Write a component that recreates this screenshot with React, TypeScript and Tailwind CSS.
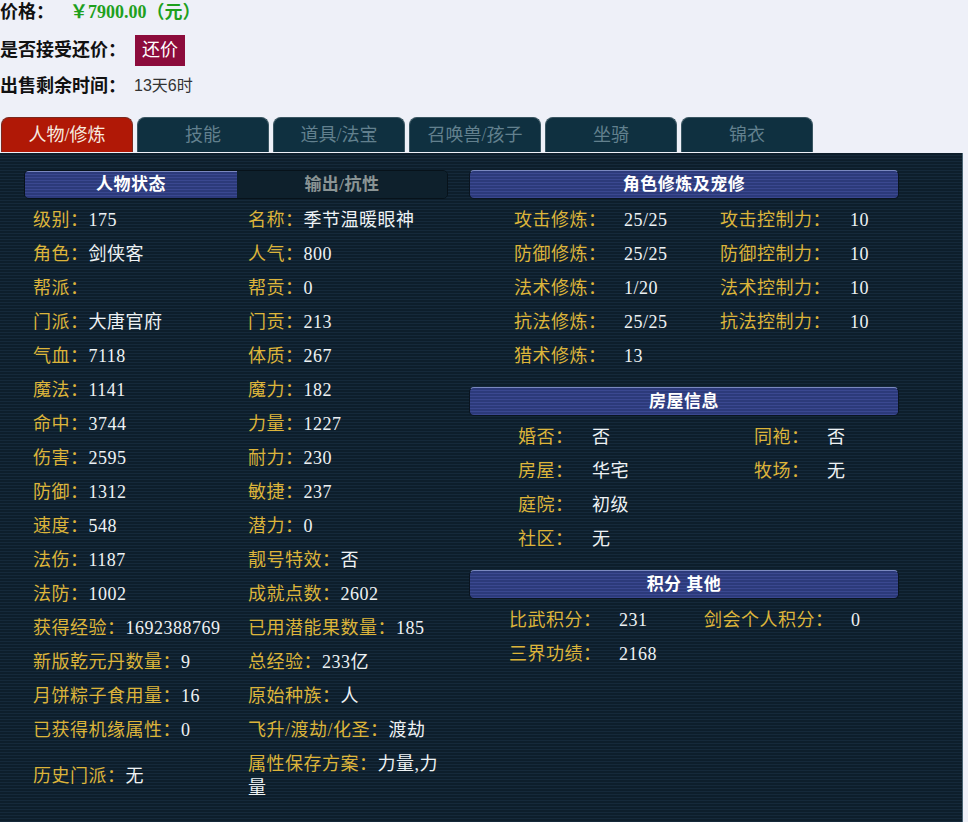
import React from "react";

type Pair = [string, string];

const FONT = "font-['Liberation_Serif','Noto_Sans_CJK_SC',serif]";
const SCAN =
   "bg-[repeating-linear-gradient(180deg,#0d1e2b_0px,#0d1e2b_2px,#15293a_2px,#15293a_3px)]";
const BAR =
   "bg-[repeating-linear-gradient(180deg,#2c3a7a_0px,#2c3a7a_2px,#3a4890_2px,#3a4890_3px)]";

const tabs = ["人物/修炼", "技能", "道具/法宝", "召唤兽/孩子", "坐骑", "锦衣"];

// "|" marks where a long value breaks onto the next line
const baseRows: [Pair, Pair][] = [
   [["级别", "175"], ["名称", "季节温暖眼神"]],
   [["角色", "剑侠客"], ["人气", "800"]],
   [["帮派", ""], ["帮贡", "0"]],
   [["门派", "大唐官府"], ["门贡", "213"]],
   [["气血", "7118"], ["体质", "267"]],
   [["魔法", "1141"], ["魔力", "182"]],
   [["命中", "3744"], ["力量", "1227"]],
   [["伤害", "2595"], ["耐力", "230"]],
   [["防御", "1312"], ["敏捷", "237"]],
   [["速度", "548"], ["潜力", "0"]],
   [["法伤", "1187"], ["靓号特效", "否"]],
   [["法防", "1002"], ["成就点数", "2602"]],
   [["获得经验", "1692388769"], ["已用潜能果数量", "185"]],
   [["新版乾元丹数量", "9"], ["总经验", "233亿"]],
   [["月饼粽子食用量", "16"], ["原始种族", "人"]],
   [["已获得机缘属性", "0"], ["飞升/渡劫/化圣", "渡劫"]],
   [["历史门派", "无"], ["属性保存方案", "力量,力|量"]],
];

const cultivation: [Pair, Pair | null][] = [
   [["攻击修炼", "25/25"], ["攻击控制力", "10"]],
   [["防御修炼", "25/25"], ["防御控制力", "10"]],
   [["法术修炼", "1/20"], ["法术控制力", "10"]],
   [["抗法修炼", "25/25"], ["抗法控制力", "10"]],
   [["猎术修炼", "13"], null],
];

const house: [Pair, Pair | null][] = [
   [["婚否", "否"], ["同袍", "否"]],
   [["房屋", "华宅"], ["牧场", "无"]],
   [["庭院", "初级"], null],
   [["社区", "无"], null],
];

const scores: [Pair, Pair | null][] = [
   [["比武积分", "231"], ["剑会个人积分", "0"]],
   [["三界功绩", "2168"], null],
];

const Label = ({ text }: { text: string }) => <span className="text-[#dcb43a]">{text}：</span>;
const Value = ({ text }: { text: string }) => <span className="text-[#eef2f4]">{text}</span>;

const Field = ({ item }: { item: Pair }) => {
   const parts = item[1].split("|");
   return (
      <div className="text-[#eef2f4]">
         <span className="text-[#dcb43a]">{item[0]}：</span>
         {parts.map((p, i) => (
            <React.Fragment key={i}>
               {i > 0 && <br />}
               {p}
            </React.Fragment>
         ))}
      </div>
   );
};

const Bar = ({ title }: { title: string }) => (
   <div
      className={`${BAR} h-[29px] rounded-[5px] border border-[#0a1520] border-t-[#7a88c0] flex items-center justify-center text-[17px] font-bold text-white`}
   >
      {title}
   </div>
);

// four-column rows used by the right-hand blocks
const KvTable = ({ rows, cols, pad }: { rows: [Pair, Pair | null][]; cols: string; pad: string }) => (
   <div className={`mt-[4px] ${pad}`}>
      {rows.map(([a, b], i) => (
         <div key={i} className={`grid ${cols} h-[34px] items-center`}>
            <Label text={a[0]} />
            <Value text={a[1]} />
            {b ? <Label text={b[0]} /> : <span />}
            {b ? <Value text={b[1]} /> : <span />}
         </div>
      ))}
   </div>
);

export default function App() {
   return (
      <div className={`${FONT} bg-[#eef0f8] min-h-[822px] w-[968px] overflow-hidden`}>
         <div className="h-[24px] flex items-center text-[18px] font-bold text-[#111]">
            <span>价格：</span>
            <span className="ml-[16px] text-[#1ea01e]">￥7900.00（元）</span>
         </div>
         <div className="mt-[11px] h-[31px] flex items-center text-[18px] font-bold text-[#111]">
            <span>是否接受还价：</span>
            <span className="ml-[9px] w-[50px] h-[31px] bg-[#8c0c3c] text-white font-normal flex items-center justify-center">
               还价
            </span>
         </div>
         <div className="mt-[8px] h-[24px] flex items-center text-[18px]">
            <span className="font-bold text-[#111]">出售剩余时间：</span>
            <span className="ml-[8px] text-[16px] text-[#333] font-['Liberation_Sans','Noto_Sans_CJK_SC',sans-serif]">
               13天6时
            </span>
         </div>

         <div className="mt-[19px] flex gap-[4px] pl-[1px] h-[35px]">
            {tabs.map((t, i) => (
               <div
                  key={t}
                  className={`w-[132px] rounded-t-[8px] border border-b-0 flex items-center justify-center text-[18px] ${
                     i === 0
                        ? "bg-[#b01806] border-[#7a2a20] text-[#f8ece0]"
                        : "bg-[#0f3040] border-[#3a5662] text-[#62808e]"
                  }`}
               >
                  {t}
               </div>
            ))}
         </div>

         <div className={`${SCAN} mt-[1px] w-[963px] min-h-[669px] border-r border-[#4a6474] pt-[17px] pl-[24px] flex gap-[21px] text-[18px] tracking-[0.5px]`}>
            <div className="w-[424px]">
               <div className="h-[29px] rounded-[5px] border border-[#07121a] flex overflow-hidden">
                  <div className={`${BAR} w-[212px] border-t border-[#7a88c0] flex items-center justify-center text-[17px] font-bold text-white`}>
                     人物状态
                  </div>
                  <div className="flex-1 flex items-center justify-center text-[17px] font-bold text-[#8a9494] bg-[#0e202c]">
                     输出/抗性
                  </div>
               </div>
               <div className="mt-[4px] pl-[9px]">
                  {baseRows.map(([a, b], i) => (
                     <div
                        key={i}
                        className={`grid grid-cols-[215px_200px] items-center leading-[24px] ${
                           i === baseRows.length - 1 ? "py-[5px]" : "h-[34px]"
                        }`}
                     >
                        <Field item={a} />
                        <Field item={b} />
                     </div>
                  ))}
               </div>
            </div>

            <div className="w-[430px]">
               <Bar title="角色修炼及宠修" />
               <KvTable rows={cultivation} cols="grid-cols-[110px_96px_130px_1fr]" pad="pl-[45px]" />
               <div className="mt-[14px]">
                  <Bar title="房屋信息" />
               </div>
               <KvTable rows={house} cols="grid-cols-[74px_162px_73px_1fr]" pad="pl-[49px]" />
               <div className="mt-[14px]">
                  <Bar title="积分 其他" />
               </div>
               <KvTable rows={scores} cols="grid-cols-[110px_85px_147px_1fr]" pad="pl-[40px]" />
            </div>
         </div>
      </div>
   );
}
